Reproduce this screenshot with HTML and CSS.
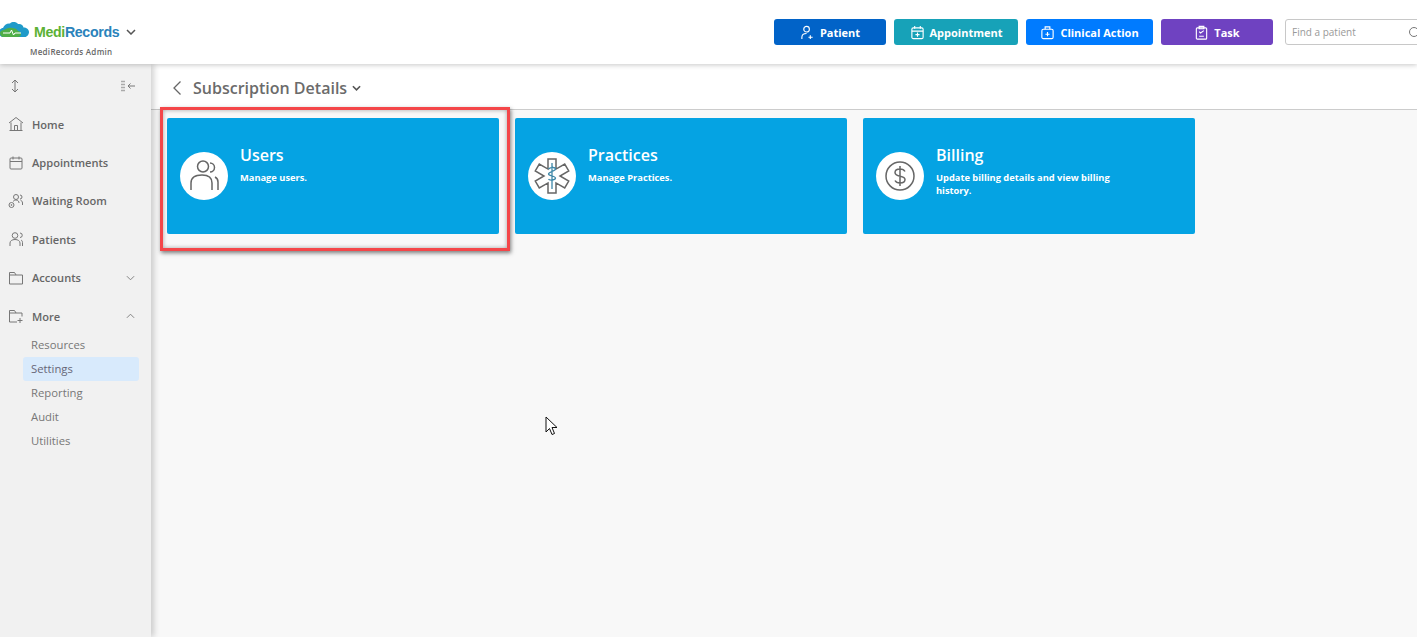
FILE: index.html
```html
<!DOCTYPE html>
<html lang="en">
<head>
<meta charset="utf-8">
<title>Subscription Details</title>
<link rel="stylesheet" href="styles.css">
</head>
<body>
<header class="topbar">
  <div class="brand">
    <div class="brand-row">
      <svg class="cloud" viewBox="0 0 30 16" width="30" height="16"><path d="M4 15C1 15 0 12 0 10s2-4 4-4c1-3 4-5 7-4.500 2-2 6-2 8 .5 3-.5 5 1 5.500 3.500 3 0 5.500 2 5.500 4.500S28 15 26 15z" fill="#1f9ac9"/><path d="M5 15c-3 0-4-2-4-4s2-3 4-3c2-1 5-3 8-2 3 0 5 1 6 3 2 0 3 2 3 3s-1 3-3 3z" fill="#4fae47"/><path d="M4 11h7l1.500-3 2 5 1.500-2h6" fill="none" stroke="#fff" stroke-width="1"/></svg>
      <span class="brand-name"><span class="medi">Medi</span><span class="records">Records</span></span>
      <svg class="brand-caret" viewBox="0 0 10 6" width="10" height="6"><path d="M1 1l4 4 4-4" fill="none" stroke="#555" stroke-width="1.500"/></svg>
    </div>
    <div class="brand-sub">MediRecords Admin</div>
  </div>
  <div class="actions">
    <button class="act act-patient"><svg viewBox="0 0 16 16" width="15" height="15"><circle cx="7" cy="4.500" r="3" class="ic"/><path d="M2 15v-2c0-2.500 2-4 5-4M11 11v4M9 13h4.500" class="ic"/></svg>Patient</button>
    <button class="act act-appt"><svg viewBox="0 0 16 16" width="15" height="15"><rect x="2" y="3" width="12" height="11.500" rx="1.500" class="ic"/><path d="M2 6.500h12M5 1v3M11 1v3M8 8v4.500M5.800 10.300h4.400" class="ic"/></svg>Appointment</button>
    <button class="act act-clin"><svg viewBox="0 0 16 16" width="15" height="15"><rect x="2" y="4.500" width="12" height="10" rx="1.500" class="ic"/><path d="M5.500 4.500V2h5v2.500M8 7.500v4.500M5.800 9.800h4.400" class="ic"/></svg>Clinical Action</button>
    <button class="act act-task"><svg viewBox="0 0 16 16" width="15" height="15"><rect x="2.500" y="3" width="11" height="12" rx="1" class="ic"/><path d="M5.500 1.500h5V4h-5zM5.500 7l1.500 1.500L10.500 6M5.500 12h5" class="ic"/></svg>Task</button>
    <div class="search"><span>Find a patient</span><svg viewBox="0 0 12 12" width="12" height="12"><circle cx="6" cy="6" r="4.500" fill="none" stroke="#777" stroke-width="1"/></svg></div>
  </div>
</header>
<div class="body">
  <aside class="sidebar">
    <div class="side-tools">
      <svg viewBox="0 0 10 16" width="10" height="16"><path d="M5 2v12M2 5l3-3 3 3M2 11l3 3 3-3" class="line"/></svg>
      <svg viewBox="0 0 14 12" width="14" height="12"><path d="M0 1.500h4M0 4.500h4M0 7.500h4M0 10.500h4" stroke="#aaa" stroke-width="1.500" fill="none"/><path d="M14 6H7M9.500 3.500L7 6l2.500 2.500" class="line"/></svg>
    </div>
    <nav class="nav">
      <a class="nav-item home"><svg viewBox="0 0 16 16" width="16" height="16"><path d="M1 7l7-5.500L15 7M3 6.500V14.500h10V6.500M1.500 14.500h13M6.500 14.500v-5h3v5" class="line"/></svg>Home</a>
      <a class="nav-item"><svg viewBox="0 0 16 16" width="16" height="16"><rect x="2" y="3" width="12" height="11" rx="1" class="line"/><path d="M2 6.500h12M5 1.500v3M11 1.500v3" class="line"/></svg>Appointments</a>
      <a class="nav-item"><svg viewBox="0 0 16 16" width="16" height="16"><circle cx="8" cy="4" r="2.500" class="line"/><path d="M12 2a2 2 0 0 1 0 4M14.500 12V10c0-1.500-1-2.500-2-2.800M5 8.500c1-1 2-1.500 3-1.500 2 0 3 1.500 3 3" class="line"/><circle cx="3.500" cy="12" r="2.500" class="line"/><circle cx="3.500" cy="12" r=".5" class="line"/></svg>Waiting Room</a>
      <a class="nav-item"><svg viewBox="0 0 16 16" width="16" height="16"><circle cx="7" cy="4.500" r="2.800" class="line"/><path d="M2 15v-3c0-2 2-3.500 5-3.500s5 1.500 5 3.500v3M12 2a2.200 2.200 0 0 1 0 4.500M14.500 15v-3.500c0-1-.5-2-1.500-2.500" class="line"/></svg>Patients</a>
      <a class="nav-item"><svg viewBox="0 0 16 16" width="16" height="16"><path d="M1.500 14V2.500h5l1.500 2.500h6.500V14zM1.500 5H8" class="line"/></svg>Accounts<svg class="chev" viewBox="0 0 10 6" width="9" height="6"><path d="M1 1l4 4 4-4" class="line"/></svg></a>
      <a class="nav-item"><svg viewBox="0 0 16 16" width="16" height="16"><path d="M14 8.500V5H8L6.500 2.500h-5V14H9M1.500 5H8M12 10v5M9.500 12.500h5" class="line"/></svg>More<svg class="chev" viewBox="0 0 10 6" width="9" height="6"><path d="M1 5l4-4 4 4" class="line"/></svg></a>
    </nav>
    <ul class="subnav">
      <li>Resources</li>
      <li class="active">Settings</li>
      <li>Reporting</li>
      <li>Audit</li>
      <li>Utilities</li>
    </ul>
  </aside>
  <main class="main">
    <div class="pagehead">
      <svg viewBox="0 0 10 16" width="10" height="16"><path d="M8.500 1.500L2 8l6.500 6.500" fill="none" stroke="#666" stroke-width="1.300"/></svg>
      <h1>Subscription Details</h1>
      <svg viewBox="0 0 10 6" width="9" height="6"><path d="M1 1l4 4 4-4" fill="none" stroke="#555" stroke-width="1.800"/></svg>
    </div>
    <section class="cards">
      <article class="card">
        <div class="card-ic"><svg viewBox="0 0 32 32" width="32" height="32"><circle cx="15" cy="6.500" r="5.500" class="ici"/><path d="M3 30v-7c0-5 4-8 11-8s10 3 10 8v7M22 3a4.500 4.500 0 0 1 0 9M30 30v-8c0-2-1-4-3-5" class="ici"/></svg></div>
        <div class="card-text"><h2>Users</h2><p>Manage users.</p></div>
      </article>
      <article class="card">
        <div class="card-ic"><svg viewBox="0 0 36 36" width="36" height="36"><path d="M14 1h8v10.070L30.720 6.040l4 6.920L26 18l8.720 5.040-4 6.920L22 24.930V35h-8V24.930L5.280 29.960l-4-6.920L10 18 1.280 12.960l4-6.920L14 11.070z" class="ici"/><path d="M18 5v26M14.500 11c2-2 7-2 7 0s-7 3-7 5 7 2 7 4-6 3-7 1" fill="none" stroke="#3d87a8" stroke-width="1.300"/></svg></div>
        <div class="card-text"><h2>Practices</h2><p>Manage Practices.</p></div>
      </article>
      <article class="card">
        <div class="card-ic"><svg viewBox="0 0 32 32" width="32" height="32"><circle cx="16" cy="16" r="14" class="ici"/><path d="M21 11.500c-1-2-3-2.500-5-2.500-3 0-5 1.500-5 3.500 0 5 10 2.500 10 7 0 2-2 3.500-5 3.500-2 0-4-.5-5-2.500M16 6v20" class="ici"/></svg></div>
        <div class="card-text"><h2>Billing</h2><p>Update billing details and view billing history.</p></div>
      </article>
    </section>
  </main>
</div>
<div class="highlight"></div>
<svg class="cursor" viewBox="0 0 13 20" width="13" height="20"><path d="M1 1v15l3.500-3.500 2.500 6 2.500-1-2.500-6h5z" fill="#fff" stroke="#111" stroke-width="1"/></svg>
</body>
</html>
```
FILE: styles.css
```css
* { box-sizing: border-box; }
html, body { margin: 0; height: 100%; overflow: hidden; }
body { font-family: "Open Sans", "Noto Sans", sans-serif; color: #555; background: #f8f8f8; display: flex; flex-direction: column; }
.topbar { height: 64px; flex: none; background: #fff; display: flex; justify-content: space-between; align-items: center; box-shadow: 0 1px 5px rgba(0,0,0,.22); position: relative; z-index: 2; }
.brand { width: 140px; align-self: flex-start; padding-top: 22px; }
.brand-row { display: flex; align-items: center; }
.cloud { flex: none; margin: 0 0 3px -1px; }
.brand-name { font-family: "Liberation Sans", Arial, sans-serif; font-weight: 700; font-size: 14.200px; letter-spacing: -.35px; margin-left: 5px; }
.medi { color: #5cb135; }
.records { color: #2a83bb; }
.brand-caret { margin-left: 7px; }
.brand-sub { font-size: 8px; font-weight: 600; color: #666; margin: 5px 0 0 30px; letter-spacing: .3px; white-space: nowrap; }
.actions { display: flex; align-items: center; gap: 8px; margin-right: -12px; }
.act { height: 26px; border: 0; border-radius: 3px; color: #fff; font-family: "Open Sans", sans-serif; font-weight: 700; font-size: 11px; display: flex; align-items: center; justify-content: center; gap: 5px; padding: 0; }
.act-patient { width: 112px; background: #0163c8; }
.act-appt { width: 124px; background: #17a2b8; }
.act-clin { width: 127px; background: #007bff; }
.act-task { width: 112px; background: #6f42c1; margin-right: 4px; }
.ic { fill: none; stroke: #fff; stroke-width: 1.200; }
.search { width: 144px; height: 26px; border: 1px solid #c8c8c8; border-radius: 3px; background: #fff; display: flex; align-items: center; justify-content: space-between; padding: 0 8px 0 6px; font-size: 10px; color: #999; }
.body { flex: 1; display: flex; min-height: 0; }
.sidebar { width: 151px; flex: none; background: #f1f1f1; box-shadow: 3px 0 6px rgba(0,0,0,.18); position: relative; z-index: 1; padding-top: 13px; }
.side-tools { display: flex; justify-content: space-between; align-items: center; padding: 0 16px 0 10px; height: 18px; }
.line { fill: none; stroke: #777; stroke-width: 1; }
.nav { margin-top: 10px; display: flex; flex-direction: column; }
.nav-item { height: 38.400px; display: flex; align-items: center; gap: 8px; padding: 0 16px 0 8px; font-size: 11.100px; font-weight: 600; color: #666; }
.chev { margin-left: auto; }
.subnav { list-style: none; margin: -2px 0 0 23px; padding: 0; width: 116px; font-size: 11.300px; font-weight: 500; color: #777; }
.subnav li { height: 24px; line-height: 24px; padding-left: 8px; border-radius: 3px; }
.subnav .active { background: #d8eafc; color: #667; }
.main { flex: 1; min-width: 0; }
.pagehead { height: 46px; background: #fff; border-bottom: 1px solid #ccc; display: flex; align-items: center; padding: 2px 0 0 21px; }
.pagehead h1 { margin: 0 5px 0 11px; font-size: 16px; font-weight: 600; color: #6b6b6b; line-height: 1; }
.cards { display: flex; gap: 16px; padding: 8px 0 0 16px; }
.card { width: 332px; height: 116px; background: #05a3e3; border-radius: 2px; color: #fff; display: flex; padding: 34px 13px 0; }
.card-ic { width: 48px; height: 48px; border-radius: 50%; background: #fff; display: flex; align-items: center; justify-content: center; flex: none; }
.ici { fill: none; stroke: #666; stroke-width: 1.500; }
.card-text { margin-left: 12px; width: 190px; margin-top: -8px; }
.card-text h2 { margin: 0; font-size: 16px; font-weight: 600; line-height: 22px; }
.card-text p { margin: 5px 0 0; font-size: 9.300px; font-weight: 700; line-height: 13px; }
.highlight { position: absolute; left: 160px; top: 107px; width: 350px; height: 144px; border: 3px solid #f44649; box-shadow: 1px 2px 4px rgba(0,0,0,.5), inset 0 0 4px rgba(0,0,0,.35); z-index: 3; }
.cursor { position: absolute; left: 545px; top: 416px; z-index: 4; }
```
